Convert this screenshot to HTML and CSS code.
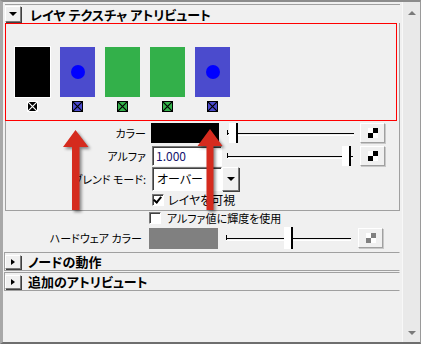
FILE: index.html
```html
<!DOCTYPE html>
<html lang="ja">
<head>
    <meta charset="UTF-8">
    <meta name="viewport" content="width=device-width, initial-scale=1.0">
    <title>レイヤ テクスチャ アトリビュート</title>
    <link rel="stylesheet" href="styles.css">
</head>
<body>
    <div class="window">
        <div class="panel">
            <div class="frame-head">
                <span class="fold-btn"><span class="tri-down"></span></span>
                <span class="frame-title">レイヤ テクスチャ アトリビュート</span>
            </div>

            <div class="frame-body">
                <div class="layers">
                    <div class="layer">
                        <div class="swatch black"></div>
                        <span class="mark black">
                            <svg width="9" height="9" viewBox="0 0 9 9"><path d="M0 0L9 9M9 0L0 9" stroke="#fff" stroke-width="1.2"/></svg>
                        </span>
                    </div>
                    <div class="layer">
                        <div class="swatch blue"><span class="dot"></span></div>
                        <span class="mark blue">
                            <svg width="9" height="9" viewBox="0 0 9 9"><path d="M0 0L9 9M9 0L0 9" stroke="#000" stroke-width="1.2"/></svg>
                        </span>
                    </div>
                    <div class="layer">
                        <div class="swatch green"></div>
                        <span class="mark green">
                            <svg width="9" height="9" viewBox="0 0 9 9"><path d="M0 0L9 9M9 0L0 9" stroke="#000" stroke-width="1.2"/></svg>
                        </span>
                    </div>
                    <div class="layer">
                        <div class="swatch green"></div>
                        <span class="mark green">
                            <svg width="9" height="9" viewBox="0 0 9 9"><path d="M0 0L9 9M9 0L0 9" stroke="#000" stroke-width="1.2"/></svg>
                        </span>
                    </div>
                    <div class="layer">
                        <div class="swatch blue"><span class="dot"></span></div>
                        <span class="mark blue">
                            <svg width="9" height="9" viewBox="0 0 9 9"><path d="M0 0L9 9M9 0L0 9" stroke="#000" stroke-width="1.2"/></svg>
                        </span>
                    </div>
                </div>

                <div class="row row-color">
                    <span class="lbl">カラー</span>
                    <span class="color-field"></span>
                    <span class="slider"><span class="thumb" style="left: 2px"></span></span>
                    <span class="map-btn"><span class="checker"></span></span>
                </div>

                <div class="row row-alpha">
                    <span class="lbl">アルファ</span>
                    <span class="text-field">1.000</span>
                    <span class="slider"><span class="thumb" style="left: 115px"></span></span>
                    <span class="map-btn"><span class="checker"></span></span>
                </div>

                <div class="row row-blend">
                    <span class="lbl">ブレンド モード:</span>
                    <span class="combo">オーバー</span>
                    <span class="combo-btn"><span class="tri-down"></span></span>
                </div>

                <div class="row row-visible">
                    <span class="lbl"></span>
                    <span class="check on"></span>
                    <span class="check-text">レイヤを可視</span>
                </div>
            </div>

            <div class="row row-luma">
                <span class="lbl"></span>
                <span class="check"></span>
                <span class="check-text">アルファ値に輝度を使用</span>
            </div>

            <div class="row row-hw">
                <span class="lbl">ハードウェア カラー</span>
                <span class="color-field grey"></span>
                <span class="slider"><span class="thumb" style="left: 58px"></span></span>
                <span class="map-btn disabled"><span class="checker"></span></span>
            </div>

            <div class="fold-bar">
                <span class="fold-btn small"><span class="tri-right"></span></span>
                <span class="frame-title">ノードの動作</span>
            </div>
            <div class="fold-bar">
                <span class="fold-btn small"><span class="tri-right"></span></span>
                <span class="frame-title">追加のアトリビュート</span>
            </div>
        </div>

        <div class="scrollbar">
            <span class="sb-up"></span>
            <span class="sb-down"></span>
        </div>
    </div>

    <!-- callout arrows drawn over the panel -->
    <svg class="arrows" width="421" height="344" viewBox="0 0 421 344">
        <polygon points="75.5,130 88.5,147 79.5,147 79.5,210 72,210 72,147 63,147"/>
        <polygon points="210,129 222.5,146 213.5,146 213.5,210 206.5,210 206.5,146 197.5,146"/>
    </svg>
</body>
</html>
```

FILE: styles.css
```css
body {
    margin: 0;
    background-color: #f0f0f0;
    font-family: "Noto Sans CJK JP", "Noto Sans", sans-serif;
    font-size: 11px;
    line-height: 1;
    color: #000;
    font-feature-settings: "palt";
}
.window {
    display: flex;
    width: 421px;
    height: 344px;
    box-sizing: border-box;
    border-top: 2px solid #8c8c8c;
    border-bottom: 2px solid #6e6e6e;
    border-left: 3px solid #a8a8a8;
    border-right: 1px solid #9a9a9a;
    background-color: #f0f0f0;
    overflow: hidden;
}
.panel {
    width: 399px;
    padding: 2px 2px 0 2px;
    box-sizing: border-box;
}
.frame-head {
    display: flex;
    align-items: center;
    height: 18px;
    border-top: 1px solid #a0a0a0;
}
.frame-title {
    font-size: 13px;
    font-weight: bold;
    margin-left: 9px;
    white-space: nowrap;
}
.fold-btn {
    display: flex;
    align-items: center;
    justify-content: center;
    width: 16px;
    height: 16px;
    box-sizing: border-box;
    background-color: #f0f0f0;
    border: 1px solid;
    border-color: #fff #7a7a7a #7a7a7a #fff;
    box-shadow: 1px 1px 0 #404040;
}
.fold-btn.small {
    height: 14px;
}
.tri-down {
    width: 0;
    height: 0;
    border-left: 4px solid transparent;
    border-right: 4px solid transparent;
    border-top: 4px solid #000;
}
.tri-right {
    width: 0;
    height: 0;
    border-top: 3px solid transparent;
    border-bottom: 3px solid transparent;
    border-left: 4px solid #000;
}
.frame-body {
    border: 1px solid #a0a0a0;
    border-top: none;
    padding-bottom: 4px;
}
.layers {
    display: flex;
    gap: 10px;
    width: 392px;
    height: 98px;
    margin-left: -1px;
    box-sizing: border-box;
    border: 1px solid #ff0000;
    padding: 23px 0 0 9px;
}
.layer {
    display: flex;
    flex-direction: column;
    align-items: center;
    gap: 4px;
}
.swatch {
    display: flex;
    align-items: center;
    justify-content: center;
    width: 35px;
    height: 50px;
}
.swatch.black {
    background-color: #000;
    box-shadow: 0 0 0 1px #fff;
}
.swatch.blue {
    background-color: #4b4bcd;
}
.swatch.green {
    background-color: #33b04a;
}
.dot {
    width: 14px;
    height: 14px;
    border-radius: 50%;
    background-color: #0000ff;
}
.mark {
    display: flex;
    width: 11px;
    height: 11px;
    box-sizing: border-box;
    border: 1px solid #000;
}
.mark.black {
    background-color: #000;
    border-color: #fff;
}
.mark.blue {
    background-color: #4b4bcd;
}
.mark.green {
    background-color: #33b04a;
}
.row {
    display: flex;
    align-items: center;
}
.lbl {
    flex: none;
    width: 140px;
    text-align: right;
    white-space: nowrap;
}
.row-color {
    height: 20px;
    margin-top: 2px;
}
.row-alpha {
    height: 20px;
    margin-top: 3px;
}
.row-blend {
    height: 24px;
    margin-top: 1px;
}
.row-visible {
    height: 12px;
    margin-top: 3px;
}
.color-field {
    width: 68px;
    height: 20px;
    margin-left: 5px;
    background-color: #000;
}
.color-field.grey {
    width: 69px;
    height: 21px;
    margin-left: 7px;
    background-color: #808080;
}
.text-field,
.combo {
    display: flex;
    align-items: center;
    width: 70px;
    height: 100%;
    margin-left: 6px;
    padding-left: 3px;
    box-sizing: border-box;
    background-color: #fff;
    border: 1px solid;
    border-color: #7a7a7a #fff #fff #7a7a7a;
    box-shadow: inset 1px 1px 0 #404040;
    font-size: 12px;
}
.text-field {
    color: #14146e;
}
.combo {
    padding-left: 4px;
}
.combo-btn {
    display: flex;
    align-items: center;
    justify-content: center;
    width: 17px;
    height: 24px;
    box-sizing: border-box;
    border: 1px solid;
    border-color: #fff #7a7a7a #7a7a7a #fff;
    box-shadow: 1px 1px 0 #404040;
}
.slider {
    position: relative;
    width: 127px;
    height: 100%;
    margin-left: 8px;
    background: linear-gradient(#000, #000) 0 50% / 100% 1px no-repeat,
                linear-gradient(#fff, #fff) 0 calc(50% + 2px) / 100% 1px no-repeat,
                linear-gradient(#000, #000) 0 50% / 1px 6px no-repeat;
}
.row-alpha .slider {
    width: 126px;
    margin-left: 5px;
}
.thumb {
    position: absolute;
    top: 0;
    width: 9px;
    height: 100%;
    box-sizing: border-box;
    background-color: #fff;
    border-right: 2px solid #000;
}
.map-btn {
    display: flex;
    align-items: center;
    justify-content: center;
    width: 25px;
    height: 20px;
    margin-left: 6px;
    box-sizing: border-box;
    border: 1px solid;
    border-color: #fff #a0a0a0 #a0a0a0 #fff;
    box-shadow: 1px 1px 0 #c8c8c8;
}
.row-alpha .map-btn {
    margin-left: 7px;
}
.checker {
    width: 10px;
    height: 10px;
    background: conic-gradient(#000 0 25%, #fff 0 50%, #000 0 75%, #fff 0);
}
.map-btn.disabled .checker {
    background: conic-gradient(#808080 0 25%, #fff 0 50%, #808080 0 75%, #fff 0);
}
.check {
    position: relative;
    width: 12px;
    height: 12px;
    margin-left: 6px;
    box-sizing: border-box;
    background-color: #fff;
    border: 1px solid;
    border-color: #7a7a7a #fff #fff #7a7a7a;
    box-shadow: inset 1px 1px 0 #404040;
}
.check.on::after {
    content: "";
    position: absolute;
    left: 2px;
    top: 0;
    width: 3px;
    height: 6px;
    border: solid #000;
    border-width: 0 2px 2px 0;
    transform: rotate(40deg);
}
.check-text {
    margin-left: 4px;
    font-size: 12px;
    white-space: nowrap;
}
.row-luma {
    height: 12px;
    margin-top: 1px;
}
.row-luma .lbl {
    width: 138px;
}
.row-luma .check-text {
    margin-left: 6px;
    font-size: 11px;
}
.row-hw {
    height: 22px;
    margin-top: 3px;
}
.row-hw .lbl {
    width: 137px;
}
.row-hw .slider {
    width: 125px;
    margin-left: 8px;
}
.row-hw .map-btn {
    margin-left: 7px;
}
.fold-bar {
    display: flex;
    align-items: center;
    height: 17px;
    margin: 3px 0 0 -1px;
    border: 1px solid #a0a0a0;
    border-right-color: transparent;
}
.fold-bar + .fold-bar {
    margin-top: 1px;
}
.fold-bar .frame-title {
    margin-left: 7px;
}
.scrollbar {
    display: flex;
    flex-direction: column;
    justify-content: space-between;
    align-items: center;
    width: 18px;
    padding: 9px 0 7px;
    box-sizing: border-box;
    background-color: #e9e9e9;
    border-left: 1px solid #f8f8f8;
}
.sb-up {
    width: 0;
    height: 0;
    border-left: 4px solid transparent;
    border-right: 4px solid transparent;
    border-bottom: 4px solid #7a7a7a;
}
.sb-down {
    width: 0;
    height: 0;
    border-left: 4px solid transparent;
    border-right: 4px solid transparent;
    border-top: 4px solid #7a7a7a;
}
.arrows {
    position: absolute;
    top: 0;
    left: 0;
    fill: #d52b1e;
    filter: drop-shadow(2px 2px 1.5px rgba(0,0,0,0.45));
}
```
